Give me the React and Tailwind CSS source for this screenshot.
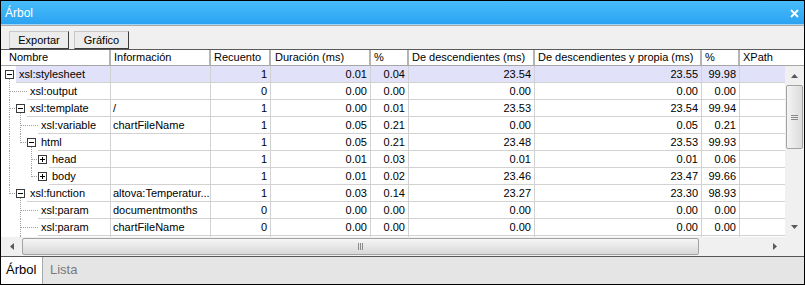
import React from 'react';

const rows = [
  { name: 'xsl:stylesheet', level: 0, node: 'minus', full: [], half: null, info: '', c: '1', d: '0.01', p: '0.04', dd: '23.54', dp: '23.55', p2: '99.98', sel: true },
  { name: 'xsl:output', level: 1, node: null, full: [0], half: null, info: '', c: '0', d: '0.00', p: '0.00', dd: '0.00', dp: '0.00', p2: '0.00' },
  { name: 'xsl:template', level: 1, node: 'minus', full: [0], half: null, info: '/', c: '1', d: '0.00', p: '0.01', dd: '23.53', dp: '23.54', p2: '99.94' },
  { name: 'xsl:variable', level: 2, node: null, full: [0, 1], half: null, info: 'chartFileName', c: '1', d: '0.05', p: '0.21', dd: '0.00', dp: '0.05', p2: '0.21' },
  { name: 'html', level: 2, node: 'minus', full: [0], half: 1, info: '', c: '1', d: '0.05', p: '0.21', dd: '23.48', dp: '23.53', p2: '99.93' },
  { name: 'head', level: 3, node: 'plus', full: [0, 2], half: null, info: '', c: '1', d: '0.01', p: '0.03', dd: '0.01', dp: '0.01', p2: '0.06' },
  { name: 'body', level: 3, node: 'plus', full: [0], half: 2, info: '', c: '1', d: '0.01', p: '0.02', dd: '23.46', dp: '23.47', p2: '99.66' },
  { name: 'xsl:function', level: 1, node: 'minus', full: [], half: 0, info: 'altova:Temperatur...', c: '1', d: '0.03', p: '0.14', dd: '23.27', dp: '23.30', p2: '98.93' },
  { name: 'xsl:param', level: 2, node: null, full: [1], half: null, info: 'documentmonths', c: '0', d: '0.00', p: '0.00', dd: '0.00', dp: '0.00', p2: '0.00' },
  { name: 'xsl:param', level: 2, node: null, full: [1], half: null, info: 'chartFileName', c: '0', d: '0.00', p: '0.00', dd: '0.00', dp: '0.00', p2: '0.00' },
  // next row only shows its top pixel in the view
  { name: '', level: 2, node: null, full: [1], half: null, info: '', c: '', d: '', p: '', dd: '', dp: '', p2: '' },
];

const dot = { stroke: '#a0a0a0', strokeDasharray: '1 1', strokeWidth: 1 };

function Gutter({ r }) {
  const L = r.level;
  const w = 15 + 11 * L;
  return (
    <svg width={w} height={17} className="shrink-0" shapeRendering="crispEdges">
      {r.full.map((k) => (
        <line key={k} x1={8.5 + 11 * k} y1={0} x2={8.5 + 11 * k} y2={17} style={dot} />
      ))}
      {r.half !== null && (
        <line x1={8.5 + 11 * r.half} y1={0} x2={8.5 + 11 * r.half} y2={9} style={dot} />
      )}
      {L > 0 && (
        <line x1={9 + 11 * (L - 1)} y1={8.5} x2={r.node ? 4 + 11 * L : w} y2={8.5} style={dot} />
      )}
      {r.node && (
        <g>
          <rect x={4.5 + 11 * L} y={4.5} width={8} height={8} fill="#fff" stroke="#3a3a3a" />
          <line x1={6 + 11 * L} y1={8.5} x2={11 + 11 * L} y2={8.5} stroke="#000" />
          {r.node === 'plus' && <line x1={8.5 + 11 * L} y1={6} x2={8.5 + 11 * L} y2={11} stroke="#000" />}
          {r.node === 'minus' && (
            <line x1={8.5 + 11 * L} y1={13} x2={8.5 + 11 * L} y2={17} style={dot} />
          )}
        </g>
      )}
    </svg>
  );
}

function Row({ r }) {
  const bg = r.sel ? 'bg-[#e1e1f9]' : 'bg-white';
  const cell = `h-[17px] shrink-0 border-r border-b border-[#d2d2d2] leading-[16px] px-[3px] whitespace-nowrap overflow-hidden ${bg}`;
  return (
    <div className="flex h-[17px]">
      <div className="flex w-[110px] shrink-0 border-r border-[#d2d2d2]">
        <Gutter r={r} />
        <div className={`flex-1 border-b border-[#d2d2d2] pl-[3px] leading-[16px] whitespace-nowrap overflow-hidden ${bg}`}>
          {r.name}
        </div>
      </div>
      <div className={`${cell} w-[100px] pl-[2px]`}>{r.info}</div>
      <div className={`${cell} w-[60px] text-right`}>{r.c}</div>
      <div className={`${cell} w-[100px] text-right`}>{r.d}</div>
      <div className={`${cell} w-[38px] text-right`}>{r.p}</div>
      <div className={`${cell} w-[126px] text-right`}>{r.dd}</div>
      <div className={`${cell} w-[167px] text-right`}>{r.dp}</div>
      <div className={`${cell} w-[38px] text-right`}>{r.p2}</div>
      <div className={`h-[17px] flex-1 border-b border-[#d2d2d2] ${bg}`}></div>
    </div>
  );
}

function Arrow({ dir }) {
  const pts = {
    up: '0,4 3.5,0 7,4',
    down: '0,0 3.5,4 7,0',
    left: '4,0 0,3.5 4,7',
    right: '0,0 4,3.5 0,7',
  }[dir];
  const vert = dir === 'up' || dir === 'down';
  return (
    <svg width={vert ? 7 : 4} height={vert ? 4 : 7}>
      <polygon points={pts} fill="#5a5a5a" />
    </svg>
  );
}

const head = 'h-full shrink-0 border-r-2 border-[#b4b4b4] pl-[3px] leading-[15px] whitespace-nowrap overflow-hidden';

export default function App() {
  return (
    <div
      className="w-[805px] h-[285px] border border-black flex flex-col bg-[#f0f0f0] text-[11px] text-black overflow-hidden"
      style={{ fontFamily: '"Liberation Sans", Arial, sans-serif' }}
    >
      {/* Title */}
      <div className="h-[24px] shrink-0 flex items-center justify-between pl-[4px] pr-[5px] bg-gradient-to-b from-[#47bcfa] to-[#2ba3f2] border-b border-[#9fd6f8]">
        <span className="text-white text-[12px]">Árbol</span>
        <svg width="9" height="9" className="mt-[1px]">
          <path d="M1 1 L8 8 M8 1 L1 8" stroke="#fff" strokeWidth="1.8" />
        </svg>
      </div>

      {/* Toolbar */}
      <div className="h-[24px] shrink-0 border-t border-[#a9a9a9] flex gap-[5px] pl-[8px] pt-[5px]">
        <button className="w-[60px] h-[18px] bg-[#ececec] border border-[#c8c8c8] border-r-[#3c3c3c] border-b-[#3c3c3c] leading-[15px]">
          Exportar
        </button>
        <button className="w-[55px] h-[18px] bg-[#ececec] border border-[#c8c8c8] border-r-[#3c3c3c] border-b-[#3c3c3c] leading-[15px]">
          Gráfico
        </button>
      </div>

      {/* Header */}
      <div className="h-[17px] shrink-0 flex bg-white border-t border-b border-t-[#5a5a5a] border-b-[#a6a6a6]">
        <div className={`${head} w-[110px] pl-[8px]`}>Nombre</div>
        <div className={`${head} w-[100px]`}>Información</div>
        <div className={`${head} w-[60px]`}>Recuento</div>
        <div className={`${head} w-[100px] pl-[4px]`}>Duración (ms)</div>
        <div className={`${head} w-[38px]`}>%</div>
        <div className={`${head} w-[126px]`}>De descendientes (ms)</div>
        <div className={`${head} w-[167px]`}>De descendientes y propia (ms)</div>
        <div className={`${head} w-[38px]`}>%</div>
        <div className="h-full flex-1 pl-[3px] leading-[15px]">XPath</div>
      </div>

      {/* Body */}
      <div className="h-[171px] shrink-0 flex">
        <div className="w-[784px] h-full overflow-hidden bg-white">
          {rows.map((r, i) => (
            <Row key={i} r={r} />
          ))}
        </div>
        <div className="w-[19px] h-full bg-[#f0f0f0] flex flex-col items-center">
          <div className="h-[19px] flex items-center justify-center">
            <Arrow dir="up" />
          </div>
          <div className="w-[17px] h-[64px] rounded-[2px] border border-[#a3a3a3] bg-gradient-to-r from-[#f4f4f4] to-[#dcdcdc] flex flex-col items-center justify-center gap-[1px]">
            <div className="w-[7px] h-[1px] bg-[#8a8a8a]" />
            <div className="w-[7px] h-[1px] bg-[#8a8a8a]" />
            <div className="w-[7px] h-[1px] bg-[#8a8a8a]" />
          </div>
          <div className="flex-1" />
          <div className="h-[20px] flex items-center justify-center">
            <Arrow dir="down" />
          </div>
        </div>
      </div>

      {/* Horizontal scrollbar */}
      <div className="h-[19px] shrink-0 flex">
        <div className="w-[784px] h-full flex items-center bg-[#f0f0f0]">
          <div className="w-[21px] flex justify-center">
            <Arrow dir="left" />
          </div>
          <div className="w-[677px] h-[17px] rounded-[2px] border border-[#a3a3a3] bg-gradient-to-b from-[#f6f6f6] to-[#d8d8d8] flex items-center justify-center gap-[1px]">
            <div className="w-[1px] h-[7px] bg-[#8a8a8a]" />
            <div className="w-[1px] h-[7px] bg-[#8a8a8a]" />
            <div className="w-[1px] h-[7px] bg-[#8a8a8a]" />
          </div>
          <div className="flex-1" />
          <div className="w-[20px] flex justify-center">
            <Arrow dir="right" />
          </div>
        </div>
        <div className="w-[19px] h-full bg-[#f0f0f0]" />
      </div>

      {/* Tabs */}
      <div className="h-[28px] shrink-0 flex border-t border-[#555] bg-[#e5e5e5]">
        <div className="w-[42px] h-full bg-white border-r border-[#a8a8a8] pl-[5px] text-[13px] leading-[26px]">
          Árbol
        </div>
        <div className="pl-[7px] text-[13px] leading-[26px] text-[#7a7a7a]">Lista</div>
      </div>
    </div>
  );
}
